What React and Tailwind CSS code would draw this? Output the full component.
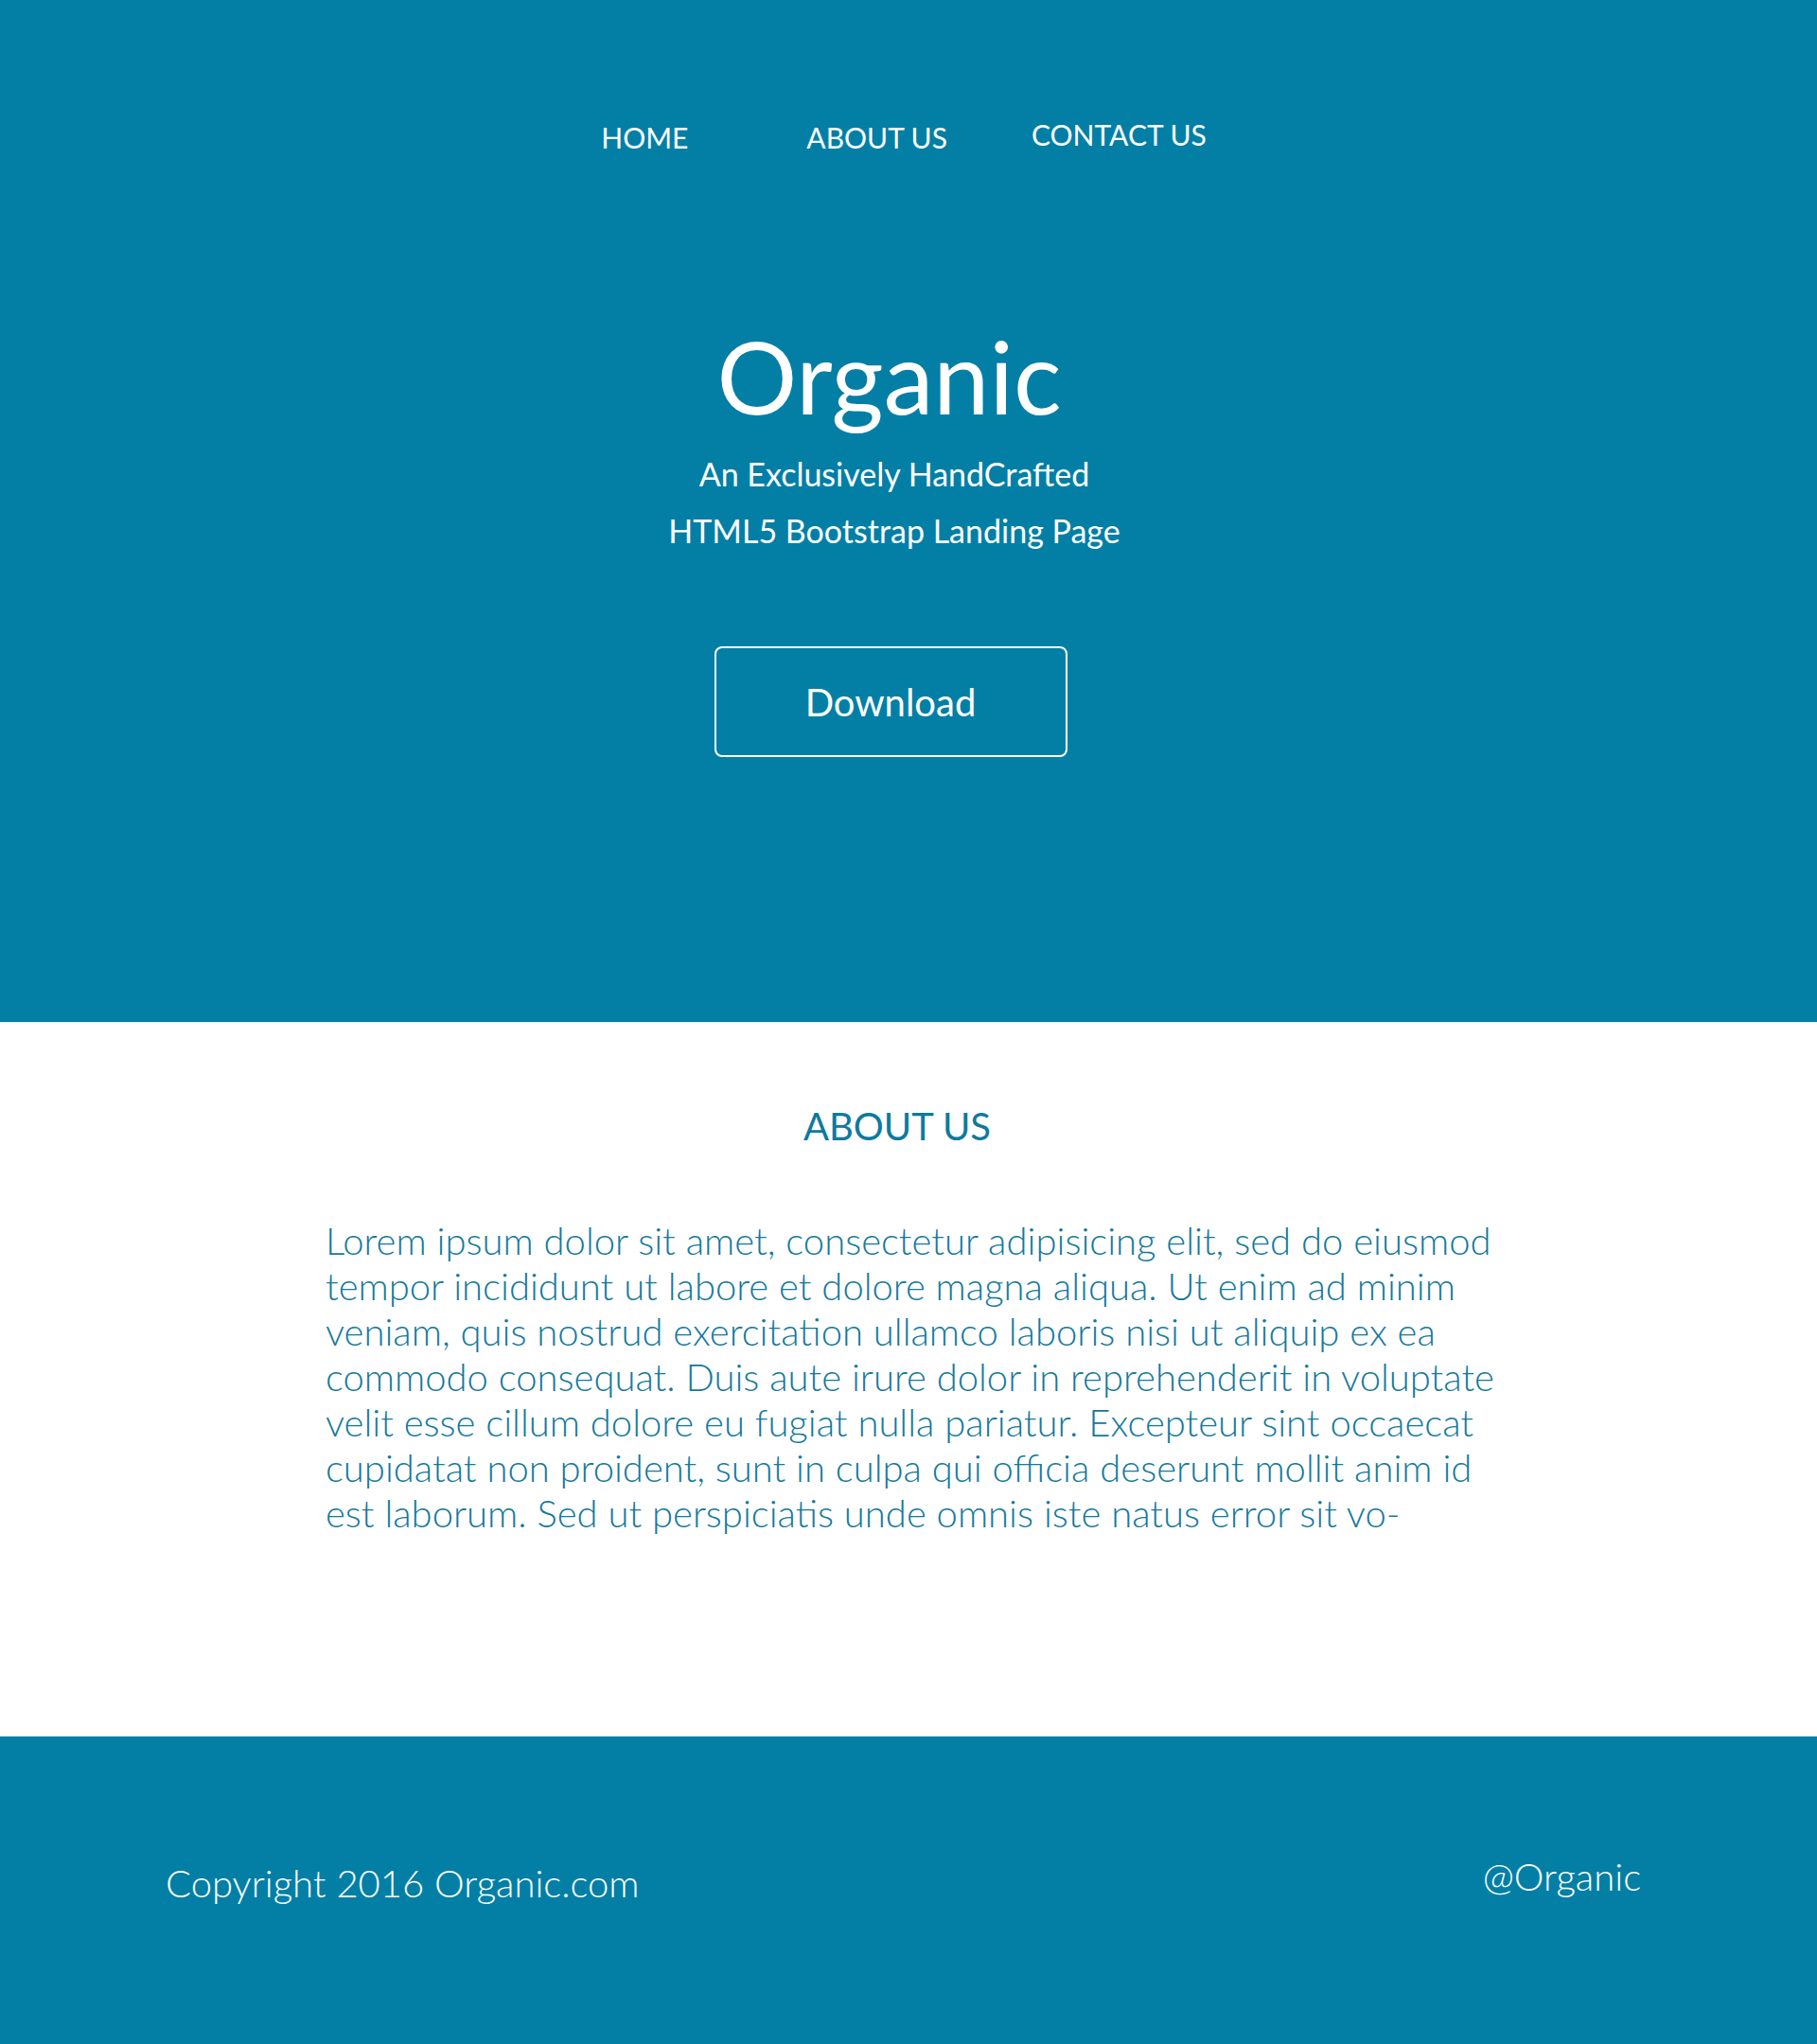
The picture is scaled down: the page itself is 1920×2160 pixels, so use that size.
export default function App() {
  const lines = [
    'Lorem ipsum dolor sit amet, consectetur adipisicing elit, sed do eiusmod',
    'tempor incididunt ut labore et dolore magna aliqua. Ut enim ad minim',
    'veniam, quis nostrud exercitation ullamco laboris nisi ut aliquip ex ea',
    'commodo consequat. Duis aute irure dolor in reprehenderit in voluptate',
    'velit esse cillum dolore eu fugiat nulla pariatur. Excepteur sint occaecat',
    'cupidatat non proident, sunt in culpa qui officia deserunt mollit anim id',
    'est laborum. Sed ut perspiciatis unde omnis iste natus error sit vo-',
  ]

  return (
    <div className="w-[1920px] font-['Lato','Liberation_Sans',sans-serif]">
      {/* Hero */}
      <header className="h-[1080px] bg-[#037fa6] text-white flex flex-col items-center">
        <nav className="mt-[127px] flex items-start pr-[10px] text-[30px] leading-[36px]">
          <a href="#" className="block">HOME</a>
          <a href="#" className="block ml-[125px]">ABOUT US</a>
          <a href="#" className="block ml-[89px] -mt-[3px]">CONTACT US</a>
        </nav>

        <h1 className="mt-[181px] mr-[41px] text-[106px] leading-[106px] font-normal">Organic</h1>
        <p className="mt-[21px] mr-[30px] text-center text-[34px] leading-[60px] font-normal">
          An Exclusively HandCrafted
          <br />
          HTML5 Bootstrap Landing Page
        </p>

        <button className="mt-[92px] mr-[38px] w-[373px] h-[117px] rounded-[8px] border-2 border-white text-[40px]">
          Download
        </button>
      </header>

      {/* About */}
      <section className="h-[755px] bg-white pt-[86px]">
        <h2 className="pr-[24px] text-center text-[40px] leading-[48px] text-[#0e7a9e]">ABOUT US</h2>
        <div className="mt-[73px] pl-[344px] text-[40px] leading-[48px] font-light text-[#15799c]">
          {lines.map((l) => (
            <div key={l} className="whitespace-nowrap">{l}</div>
          ))}
        </div>
      </section>

      {/* Footer */}
      <footer className="h-[325px] bg-[#037fa6] text-white font-light flex justify-between px-[175px] pt-[131px]">
        <div className="text-[40px] leading-[48px]">Copyright 2016 Organic.com</div>
        <div className="text-[40px] leading-[48px] -mt-[7px] mr-[11px]">@Organic</div>
      </footer>
    </div>
  )
}
